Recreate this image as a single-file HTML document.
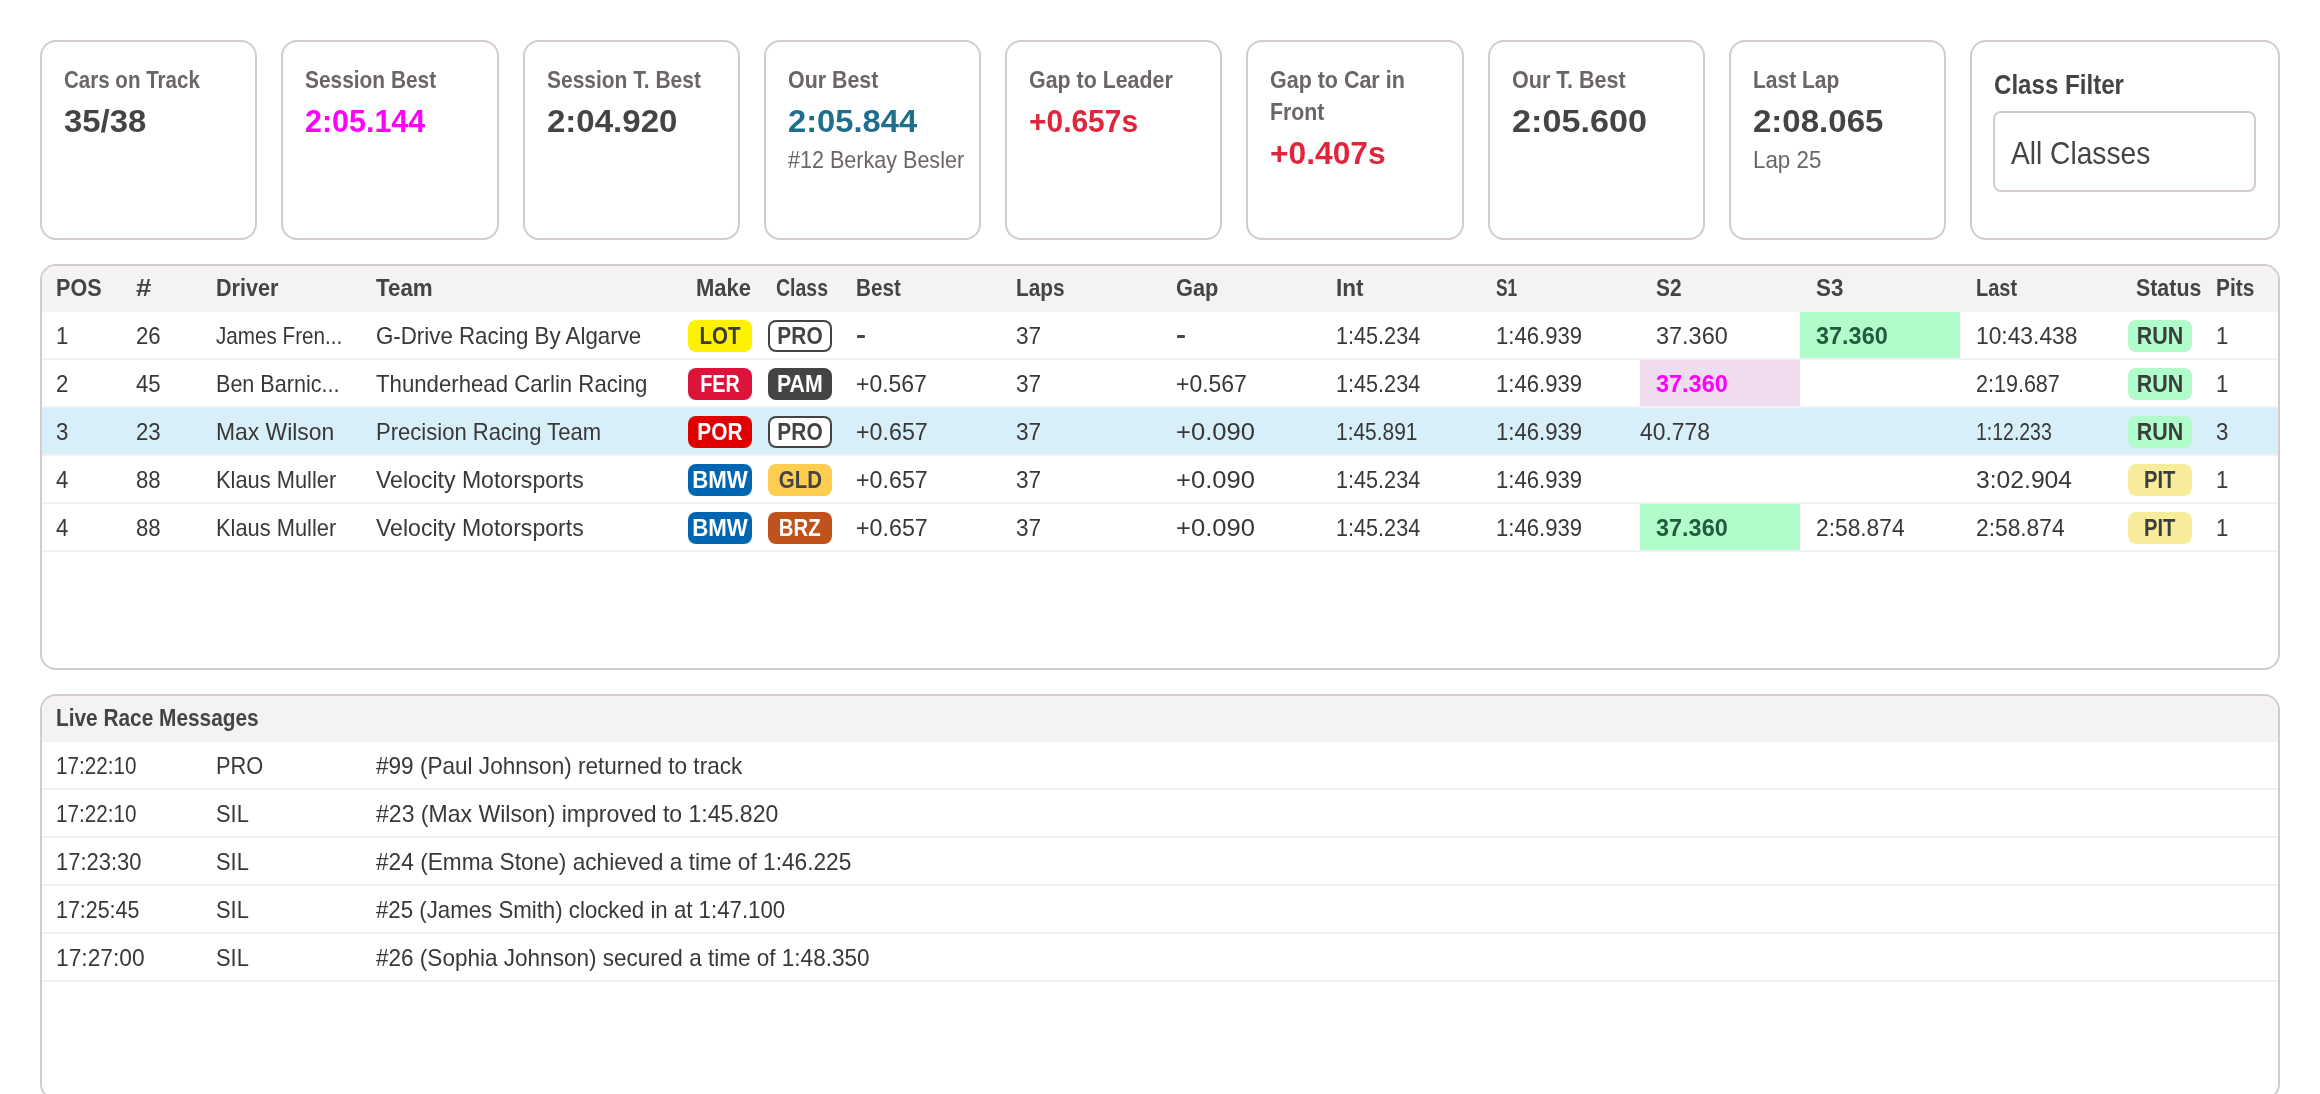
<!DOCTYPE html>
<html><head><meta charset="utf-8"><style>
html,body{margin:0;padding:0;background:#fff;width:2320px;height:1094px;overflow:hidden;position:relative}
.t{position:absolute;white-space:nowrap;transform-origin:0 0;font-family:"Liberation Sans",sans-serif}
.r{position:absolute;box-sizing:border-box}
.badge{position:absolute;box-sizing:border-box;width:64px;height:32px;border-radius:8px;font-family:"Liberation Sans",sans-serif;font-size:24px;line-height:32px;text-align:center;font-weight:bold;}
.badge[style*="border"]{line-height:28px}
</style></head><body><div id="root" style="position:absolute;left:0;top:0;width:2320px;height:1094px;will-change:transform">
<div class="r" style="left:40.0px;top:40px;width:217.25px;height:200px;border:2px solid #d3cbcc;border-radius:16px;"></div>
<div class="t" style="left:64.0px;top:68px;font-size:24px;line-height:24px;color:#6b6665;font-weight:bold;transform:scaleX(0.8555);">Cars on Track</div>
<div class="t" style="left:64.0px;top:105px;font-size:32px;line-height:32px;color:#444444;font-weight:bold;transform:scaleX(1.0279);">35/38</div>
<div class="r" style="left:281.25px;top:40px;width:217.25px;height:200px;border:2px solid #d3cbcc;border-radius:16px;"></div>
<div class="t" style="left:305.25px;top:68px;font-size:24px;line-height:24px;color:#6b6665;font-weight:bold;transform:scaleX(0.8703);">Session Best</div>
<div class="t" style="left:305.25px;top:105px;font-size:32px;line-height:32px;color:#ff00ff;font-weight:bold;transform:scaleX(0.9514);">2:05.144</div>
<div class="r" style="left:522.5px;top:40px;width:217.25px;height:200px;border:2px solid #d3cbcc;border-radius:16px;"></div>
<div class="t" style="left:546.5px;top:68px;font-size:24px;line-height:24px;color:#6b6665;font-weight:bold;transform:scaleX(0.8739);">Session T. Best</div>
<div class="t" style="left:546.5px;top:105px;font-size:32px;line-height:32px;color:#444444;font-weight:bold;transform:scaleX(1.0319);">2:04.920</div>
<div class="r" style="left:763.75px;top:40px;width:217.25px;height:200px;border:2px solid #d3cbcc;border-radius:16px;"></div>
<div class="t" style="left:787.75px;top:68px;font-size:24px;line-height:24px;color:#6b6665;font-weight:bold;transform:scaleX(0.8911);">Our Best</div>
<div class="t" style="left:787.75px;top:105px;font-size:32px;line-height:32px;color:#1f6f8b;font-weight:bold;transform:scaleX(1.0222);">2:05.844</div>
<div class="t" style="left:787.75px;top:148px;font-size:24px;line-height:24px;color:#6b6665;transform:scaleX(0.8980);">#12 Berkay Besler</div>
<div class="r" style="left:1005.0px;top:40px;width:217.25px;height:200px;border:2px solid #d3cbcc;border-radius:16px;"></div>
<div class="t" style="left:1029.0px;top:68px;font-size:24px;line-height:24px;color:#6b6665;font-weight:bold;transform:scaleX(0.8907);">Gap to Leader</div>
<div class="t" style="left:1029.0px;top:105px;font-size:32px;line-height:32px;color:#e0263c;font-weight:bold;transform:scaleX(0.9356);">+0.657s</div>
<div class="r" style="left:1246.25px;top:40px;width:217.25px;height:200px;border:2px solid #d3cbcc;border-radius:16px;"></div>
<div class="t" style="left:1270.25px;top:68px;font-size:24px;line-height:24px;color:#6b6665;font-weight:bold;transform:scaleX(0.8944);">Gap to Car in</div>
<div class="t" style="left:1270.25px;top:100px;font-size:24px;line-height:24px;color:#6b6665;font-weight:bold;transform:scaleX(0.8856);">Front</div>
<div class="t" style="left:1270.25px;top:137px;font-size:32px;line-height:32px;color:#e0263c;font-weight:bold;transform:scaleX(0.9919);">+0.407s</div>
<div class="r" style="left:1487.5px;top:40px;width:217.25px;height:200px;border:2px solid #d3cbcc;border-radius:16px;"></div>
<div class="t" style="left:1511.5px;top:68px;font-size:24px;line-height:24px;color:#6b6665;font-weight:bold;transform:scaleX(0.8977);">Our T. Best</div>
<div class="t" style="left:1511.5px;top:105px;font-size:32px;line-height:32px;color:#444444;font-weight:bold;transform:scaleX(1.0685);">2:05.600</div>
<div class="r" style="left:1728.75px;top:40px;width:217.25px;height:200px;border:2px solid #d3cbcc;border-radius:16px;"></div>
<div class="t" style="left:1752.75px;top:68px;font-size:24px;line-height:24px;color:#6b6665;font-weight:bold;transform:scaleX(0.8754);">Last Lap</div>
<div class="t" style="left:1752.75px;top:105px;font-size:32px;line-height:32px;color:#444444;font-weight:bold;transform:scaleX(1.0319);">2:08.065</div>
<div class="t" style="left:1752.75px;top:148px;font-size:24px;line-height:24px;color:#6b6665;transform:scaleX(0.9317);">Lap 25</div>
<div class="r" style="left:1970px;top:40px;width:310px;height:200px;border:2px solid #d3cbcc;border-radius:16px;"></div>
<div class="t" style="left:1994px;top:71px;font-size:28px;line-height:28px;color:#444444;font-weight:bold;transform:scaleX(0.8610);">Class Filter</div>
<div class="r" style="left:1993px;top:111px;width:263px;height:81px;border:2px solid #d3cbcc;border-radius:8px;"></div>
<div class="t" style="left:2011px;top:137px;font-size:32px;line-height:32px;color:#444444;transform:scaleX(0.8797);">All Classes</div>
<div class="r" style="left:40px;top:264px;width:2240px;height:406px;border:2px solid #d3cbcc;border-radius:16px;overflow:hidden">
<div class="r" style="left:0;top:0;width:2236px;height:46px;background:#f4f2f3"></div>
<div class="r" style="left:0;top:46px;width:2236px;height:48px;background:#fff;border-bottom:2px solid #f3f1f2"></div>
<div class="r" style="left:0;top:94px;width:2236px;height:48px;background:#fff;border-bottom:2px solid #f3f1f2"></div>
<div class="r" style="left:0;top:142px;width:2236px;height:48px;background:#d8eef8;border-bottom:2px solid #f3f1f2"></div>
<div class="r" style="left:0;top:190px;width:2236px;height:48px;background:#fff;border-bottom:2px solid #f3f1f2"></div>
<div class="r" style="left:0;top:238px;width:2236px;height:48px;background:#fff;border-bottom:2px solid #f3f1f2"></div>
</div>
<div class="r" style="left:1800px;top:312px;width:160px;height:46px;background:#b1fcca"></div>
<div class="r" style="left:1640px;top:360px;width:160px;height:46px;background:#f0dcef"></div>
<div class="r" style="left:1640px;top:504px;width:160px;height:46px;background:#b1fcca"></div>
<div class="t" style="left:56px;top:276px;font-size:24px;line-height:24px;color:#444444;font-weight:bold;transform:scaleX(0.8989);">POS</div>
<div class="t" style="left:136px;top:276px;font-size:24px;line-height:24px;color:#444444;font-weight:bold;transform:scaleX(1.1538);">#</div>
<div class="t" style="left:216px;top:276px;font-size:24px;line-height:24px;color:#444444;font-weight:bold;transform:scaleX(0.8986);">Driver</div>
<div class="t" style="left:376px;top:276px;font-size:24px;line-height:24px;color:#444444;font-weight:bold;transform:scaleX(0.9317);">Team</div>
<div class="t" style="left:696px;top:276px;font-size:24px;line-height:24px;color:#444444;font-weight:bold;transform:scaleX(0.9170);">Make</div>
<div class="t" style="left:776px;top:276px;font-size:24px;line-height:24px;color:#444444;font-weight:bold;transform:scaleX(0.8125);">Class</div>
<div class="t" style="left:856px;top:276px;font-size:24px;line-height:24px;color:#444444;font-weight:bold;transform:scaleX(0.8619);">Best</div>
<div class="t" style="left:1016px;top:276px;font-size:24px;line-height:24px;color:#444444;font-weight:bold;transform:scaleX(0.8691);">Laps</div>
<div class="t" style="left:1176px;top:276px;font-size:24px;line-height:24px;color:#444444;font-weight:bold;transform:scaleX(0.9073);">Gap</div>
<div class="t" style="left:1336px;top:276px;font-size:24px;line-height:24px;color:#444444;font-weight:bold;transform:scaleX(0.9384);">Int</div>
<div class="t" style="left:1496px;top:276px;font-size:24px;line-height:24px;color:#444444;font-weight:bold;transform:scaleX(0.7241);">S1</div>
<div class="t" style="left:1656px;top:276px;font-size:24px;line-height:24px;color:#444444;font-weight:bold;transform:scaleX(0.8690);">S2</div>
<div class="t" style="left:1816px;top:276px;font-size:24px;line-height:24px;color:#444444;font-weight:bold;transform:scaleX(0.9324);">S3</div>
<div class="t" style="left:1976px;top:276px;font-size:24px;line-height:24px;color:#444444;font-weight:bold;transform:scaleX(0.8327);">Last</div>
<div class="t" style="left:2136px;top:276px;font-size:24px;line-height:24px;color:#444444;font-weight:bold;transform:scaleX(0.8906);">Status</div>
<div class="t" style="left:2216px;top:276px;font-size:24px;line-height:24px;color:#444444;font-weight:bold;transform:scaleX(0.8698);">Pits</div>
<div class="t" style="left:56px;top:324px;font-size:24px;line-height:24px;color:#383838;transform:scaleX(0.9250);">1</div>
<div class="t" style="left:136px;top:324px;font-size:24px;line-height:24px;color:#383838;transform:scaleX(0.9250);">26</div>
<div class="t" style="left:216px;top:324px;font-size:24px;line-height:24px;color:#383838;transform:scaleX(0.8601);">James Fren...</div>
<div class="t" style="left:376px;top:324px;font-size:24px;line-height:24px;color:#383838;transform:scaleX(0.9291);">G-Drive Racing By Algarve</div>
<div class="badge" style="left:688px;top:320px;background:#fff200;color:#3a3a44;"><span style="display:inline-block;transform:scaleX(0.854)">LOT</span></div>
<div class="badge" style="left:768px;top:320px;background:#fff;color:#444;border:2px solid #444;"><span style="display:inline-block;transform:scaleX(0.871)">PRO</span></div>
<div class="r" style="left:857px;top:335px;width:8px;height:2.5px;background:#484848;border-radius:1px"></div>
<div class="t" style="left:1016px;top:324px;font-size:24px;line-height:24px;color:#383838;transform:scaleX(0.9411);">37</div>
<div class="r" style="left:1177px;top:335px;width:8px;height:2.5px;background:#484848;border-radius:1px"></div>
<div class="t" style="left:1336px;top:324px;font-size:24px;line-height:24px;color:#383838;transform:scaleX(0.9012);">1:45.234</div>
<div class="t" style="left:1496px;top:324px;font-size:24px;line-height:24px;color:#383838;transform:scaleX(0.9206);">1:46.939</div>
<div class="t" style="left:1656px;top:324px;font-size:24px;line-height:24px;color:#383838;transform:scaleX(0.9775);">37.360</div>
<div class="t" style="left:1816px;top:324px;font-size:24px;line-height:24px;color:#215c3c;font-weight:bold;transform:scaleX(0.9775);">37.360</div>
<div class="t" style="left:1976px;top:324px;font-size:24px;line-height:24px;color:#383838;transform:scaleX(0.9498);">10:43.438</div>
<div class="badge" style="left:2128px;top:320px;background:#b1fcca;color:#3a3f3b;"><span style="display:inline-block;transform:scaleX(0.894)">RUN</span></div>
<div class="t" style="left:2216px;top:324px;font-size:24px;line-height:24px;color:#383838;transform:scaleX(0.9250);">1</div>
<div class="t" style="left:56px;top:372px;font-size:24px;line-height:24px;color:#383838;transform:scaleX(0.9250);">2</div>
<div class="t" style="left:136px;top:372px;font-size:24px;line-height:24px;color:#383838;transform:scaleX(0.9250);">45</div>
<div class="t" style="left:216px;top:372px;font-size:24px;line-height:24px;color:#383838;transform:scaleX(0.8982);">Ben Barnic...</div>
<div class="t" style="left:376px;top:372px;font-size:24px;line-height:24px;color:#383838;transform:scaleX(0.9249);">Thunderhead Carlin Racing</div>
<div class="badge" style="left:688px;top:368px;background:#dc143c;color:#fff;"><span style="display:inline-block;transform:scaleX(0.823)">FER</span></div>
<div class="badge" style="left:768px;top:368px;background:#444;color:#fff;"><span style="display:inline-block;transform:scaleX(0.888)">PAM</span></div>
<div class="t" style="left:856px;top:372px;font-size:24px;line-height:24px;color:#383838;transform:scaleX(0.9571);">+0.567</div>
<div class="t" style="left:1016px;top:372px;font-size:24px;line-height:24px;color:#383838;transform:scaleX(0.9411);">37</div>
<div class="t" style="left:1176px;top:372px;font-size:24px;line-height:24px;color:#383838;transform:scaleX(0.9571);">+0.567</div>
<div class="t" style="left:1336px;top:372px;font-size:24px;line-height:24px;color:#383838;transform:scaleX(0.9012);">1:45.234</div>
<div class="t" style="left:1496px;top:372px;font-size:24px;line-height:24px;color:#383838;transform:scaleX(0.9206);">1:46.939</div>
<div class="t" style="left:1656px;top:372px;font-size:24px;line-height:24px;color:#ff00ff;font-weight:bold;transform:scaleX(0.9775);">37.360</div>
<div class="t" style="left:1976px;top:372px;font-size:24px;line-height:24px;color:#383838;transform:scaleX(0.8972);">2:19.687</div>
<div class="badge" style="left:2128px;top:368px;background:#b1fcca;color:#3a3f3b;"><span style="display:inline-block;transform:scaleX(0.894)">RUN</span></div>
<div class="t" style="left:2216px;top:372px;font-size:24px;line-height:24px;color:#383838;transform:scaleX(0.9250);">1</div>
<div class="t" style="left:56px;top:420px;font-size:24px;line-height:24px;color:#383838;transform:scaleX(0.9250);">3</div>
<div class="t" style="left:136px;top:420px;font-size:24px;line-height:24px;color:#383838;transform:scaleX(0.9250);">23</div>
<div class="t" style="left:216px;top:420px;font-size:24px;line-height:24px;color:#383838;transform:scaleX(0.9537);">Max Wilson</div>
<div class="t" style="left:376px;top:420px;font-size:24px;line-height:24px;color:#383838;transform:scaleX(0.9184);">Precision Racing Team</div>
<div class="badge" style="left:688px;top:416px;background:#e00000;color:#fff;"><span style="display:inline-block;transform:scaleX(0.871)">POR</span></div>
<div class="badge" style="left:768px;top:416px;background:#fff;color:#444;border:2px solid #444;"><span style="display:inline-block;transform:scaleX(0.871)">PRO</span></div>
<div class="t" style="left:856px;top:420px;font-size:24px;line-height:24px;color:#383838;transform:scaleX(0.9686);">+0.657</div>
<div class="t" style="left:1016px;top:420px;font-size:24px;line-height:24px;color:#383838;transform:scaleX(0.9411);">37</div>
<div class="t" style="left:1176px;top:420px;font-size:24px;line-height:24px;color:#383838;transform:scaleX(1.0652);">+0.090</div>
<div class="t" style="left:1336px;top:420px;font-size:24px;line-height:24px;color:#383838;transform:scaleX(0.8711);">1:45.891</div>
<div class="t" style="left:1496px;top:420px;font-size:24px;line-height:24px;color:#383838;transform:scaleX(0.9206);">1:46.939</div>
<div class="t" style="left:1640px;top:420px;font-size:24px;line-height:24px;color:#383838;transform:scaleX(0.9534);">40.778</div>
<div class="t" style="left:1976px;top:420px;font-size:24px;line-height:24px;color:#383838;transform:scaleX(0.8110);">1:12.233</div>
<div class="badge" style="left:2128px;top:416px;background:#b1fcca;color:#3a3f3b;"><span style="display:inline-block;transform:scaleX(0.894)">RUN</span></div>
<div class="t" style="left:2216px;top:420px;font-size:24px;line-height:24px;color:#383838;transform:scaleX(0.9250);">3</div>
<div class="t" style="left:56px;top:468px;font-size:24px;line-height:24px;color:#383838;transform:scaleX(0.9250);">4</div>
<div class="t" style="left:136px;top:468px;font-size:24px;line-height:24px;color:#383838;transform:scaleX(0.9250);">88</div>
<div class="t" style="left:216px;top:468px;font-size:24px;line-height:24px;color:#383838;transform:scaleX(0.9106);">Klaus Muller</div>
<div class="t" style="left:376px;top:468px;font-size:24px;line-height:24px;color:#383838;transform:scaleX(0.9611);">Velocity Motorsports</div>
<div class="badge" style="left:688px;top:464px;background:#0066b1;color:#fff;"><span style="display:inline-block;transform:scaleX(0.927)">BMW</span></div>
<div class="badge" style="left:768px;top:464px;background:#ffcd4f;color:#444;"><span style="display:inline-block;transform:scaleX(0.853)">GLD</span></div>
<div class="t" style="left:856px;top:468px;font-size:24px;line-height:24px;color:#383838;transform:scaleX(0.9686);">+0.657</div>
<div class="t" style="left:1016px;top:468px;font-size:24px;line-height:24px;color:#383838;transform:scaleX(0.9411);">37</div>
<div class="t" style="left:1176px;top:468px;font-size:24px;line-height:24px;color:#383838;transform:scaleX(1.0652);">+0.090</div>
<div class="t" style="left:1336px;top:468px;font-size:24px;line-height:24px;color:#383838;transform:scaleX(0.9012);">1:45.234</div>
<div class="t" style="left:1496px;top:468px;font-size:24px;line-height:24px;color:#383838;transform:scaleX(0.9206);">1:46.939</div>
<div class="t" style="left:1976px;top:468px;font-size:24px;line-height:24px;color:#383838;transform:scaleX(1.0282);">3:02.904</div>
<div class="badge" style="left:2128px;top:464px;background:#f6ec9c;color:#3a3f3b;"><span style="display:inline-block;transform:scaleX(0.842)">PIT</span></div>
<div class="t" style="left:2216px;top:468px;font-size:24px;line-height:24px;color:#383838;transform:scaleX(0.9250);">1</div>
<div class="t" style="left:56px;top:516px;font-size:24px;line-height:24px;color:#383838;transform:scaleX(0.9250);">4</div>
<div class="t" style="left:136px;top:516px;font-size:24px;line-height:24px;color:#383838;transform:scaleX(0.9250);">88</div>
<div class="t" style="left:216px;top:516px;font-size:24px;line-height:24px;color:#383838;transform:scaleX(0.9106);">Klaus Muller</div>
<div class="t" style="left:376px;top:516px;font-size:24px;line-height:24px;color:#383838;transform:scaleX(0.9611);">Velocity Motorsports</div>
<div class="badge" style="left:688px;top:512px;background:#0066b1;color:#fff;"><span style="display:inline-block;transform:scaleX(0.927)">BMW</span></div>
<div class="badge" style="left:768px;top:512px;background:#c0521c;color:#fff;"><span style="display:inline-block;transform:scaleX(0.847)">BRZ</span></div>
<div class="t" style="left:856px;top:516px;font-size:24px;line-height:24px;color:#383838;transform:scaleX(0.9686);">+0.657</div>
<div class="t" style="left:1016px;top:516px;font-size:24px;line-height:24px;color:#383838;transform:scaleX(0.9411);">37</div>
<div class="t" style="left:1176px;top:516px;font-size:24px;line-height:24px;color:#383838;transform:scaleX(1.0652);">+0.090</div>
<div class="t" style="left:1336px;top:516px;font-size:24px;line-height:24px;color:#383838;transform:scaleX(0.9012);">1:45.234</div>
<div class="t" style="left:1496px;top:516px;font-size:24px;line-height:24px;color:#383838;transform:scaleX(0.9206);">1:46.939</div>
<div class="t" style="left:1656px;top:516px;font-size:24px;line-height:24px;color:#215c3c;font-weight:bold;transform:scaleX(0.9775);">37.360</div>
<div class="t" style="left:1816px;top:516px;font-size:24px;line-height:24px;color:#383838;transform:scaleX(0.9484);">2:58.874</div>
<div class="t" style="left:1976px;top:516px;font-size:24px;line-height:24px;color:#383838;transform:scaleX(0.9484);">2:58.874</div>
<div class="badge" style="left:2128px;top:512px;background:#f6ec9c;color:#3a3f3b;"><span style="display:inline-block;transform:scaleX(0.842)">PIT</span></div>
<div class="t" style="left:2216px;top:516px;font-size:24px;line-height:24px;color:#383838;transform:scaleX(0.9250);">1</div>
<div class="r" style="left:40px;top:694px;width:2240px;height:406px;border:2px solid #d3cbcc;border-radius:16px;overflow:hidden">
<div class="r" style="left:0;top:0;width:2236px;height:46px;background:#f4f2f3"></div>
<div class="r" style="left:0;top:46px;width:2236px;height:48px;background:#fff;border-bottom:2px solid #f3f1f2"></div>
<div class="r" style="left:0;top:94px;width:2236px;height:48px;background:#fff;border-bottom:2px solid #f3f1f2"></div>
<div class="r" style="left:0;top:142px;width:2236px;height:48px;background:#fff;border-bottom:2px solid #f3f1f2"></div>
<div class="r" style="left:0;top:190px;width:2236px;height:48px;background:#fff;border-bottom:2px solid #f3f1f2"></div>
<div class="r" style="left:0;top:238px;width:2236px;height:48px;background:#fff;border-bottom:2px solid #f3f1f2"></div>
</div>
<div class="t" style="left:56px;top:706px;font-size:24px;line-height:24px;color:#444444;font-weight:bold;transform:scaleX(0.8679);">Live Race Messages</div>
<div class="t" style="left:56px;top:754px;font-size:24px;line-height:24px;color:#383838;transform:scaleX(0.8605);">17:22:10</div>
<div class="t" style="left:216px;top:754px;font-size:24px;line-height:24px;color:#383838;transform:scaleX(0.9088);">PRO</div>
<div class="t" style="left:376px;top:754px;font-size:24px;line-height:24px;color:#383838;transform:scaleX(0.9402);">#99 (Paul Johnson) returned to track</div>
<div class="t" style="left:56px;top:802px;font-size:24px;line-height:24px;color:#383838;transform:scaleX(0.8605);">17:22:10</div>
<div class="t" style="left:216px;top:802px;font-size:24px;line-height:24px;color:#383838;transform:scaleX(0.9129);">SIL</div>
<div class="t" style="left:376px;top:802px;font-size:24px;line-height:24px;color:#383838;transform:scaleX(0.9604);">#23 (Max Wilson) improved to 1:45.820</div>
<div class="t" style="left:56px;top:850px;font-size:24px;line-height:24px;color:#383838;transform:scaleX(0.9141);">17:23:30</div>
<div class="t" style="left:216px;top:850px;font-size:24px;line-height:24px;color:#383838;transform:scaleX(0.9129);">SIL</div>
<div class="t" style="left:376px;top:850px;font-size:24px;line-height:24px;color:#383838;transform:scaleX(0.9451);">#24 (Emma Stone) achieved a time of 1:46.225</div>
<div class="t" style="left:56px;top:898px;font-size:24px;line-height:24px;color:#383838;transform:scaleX(0.8928);">17:25:45</div>
<div class="t" style="left:216px;top:898px;font-size:24px;line-height:24px;color:#383838;transform:scaleX(0.9129);">SIL</div>
<div class="t" style="left:376px;top:898px;font-size:24px;line-height:24px;color:#383838;transform:scaleX(0.9267);">#25 (James Smith) clocked in at 1:47.100</div>
<div class="t" style="left:56px;top:946px;font-size:24px;line-height:24px;color:#383838;transform:scaleX(0.9487);">17:27:00</div>
<div class="t" style="left:216px;top:946px;font-size:24px;line-height:24px;color:#383838;transform:scaleX(0.9129);">SIL</div>
<div class="t" style="left:376px;top:946px;font-size:24px;line-height:24px;color:#383838;transform:scaleX(0.9388);">#26 (Sophia Johnson) secured a time of 1:48.350</div>
</div></body></html>
